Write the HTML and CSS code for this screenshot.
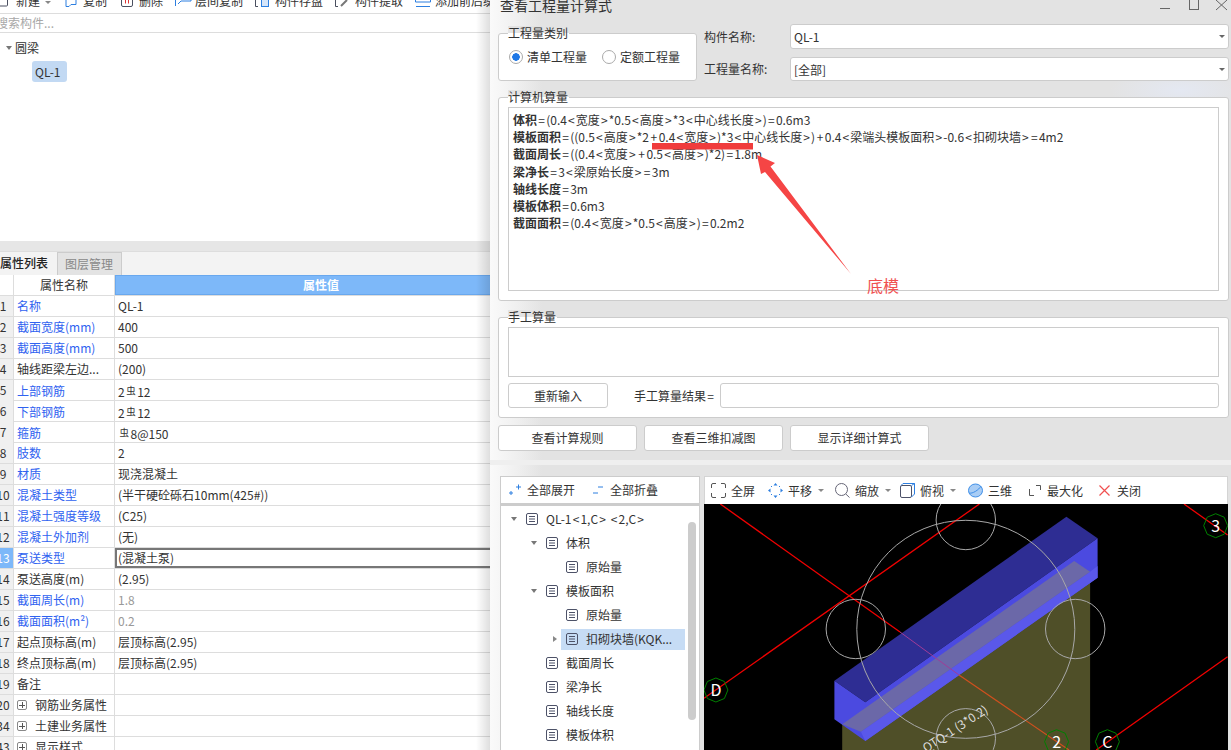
FILE: index.html
```html
<!DOCTYPE html>
<html lang="zh-CN">
<head>
<meta charset="utf-8">
<title>查看工程量计算式</title>
<link rel="stylesheet" href="styles.css">
</head>
<body>
<svg class="defs" width="0" height="0" aria-hidden="true">
  <symbol id="doc" viewBox="0 0 12 12">
    <rect x=".5" y=".5" width="11" height="11" rx="1.5" fill="none" stroke="#4d5268"/>
    <path d="M3 3.5h6M3 6h6M3 8.5h6" stroke="#4d5268" fill="none"/>
  </symbol>
</svg>
<div class="page">
  <section class="left">
    <div class="tools">
      <span class="tool"><svg class="ticon" viewBox="0 -7 14 14"><path d="M1 6h9.5a1 1 0 0 0 1-1v-8M1-7v13" fill="none" stroke="#4a4f60"/></svg>新建<i class="caret"></i></span>
      <span class="tool"><svg class="ticon" viewBox="0 -7 14 14"><path d="M3 2v4.500h3l2-2h5v-11H3z" fill="none" stroke="#2d7fe0"/></svg>复制</span>
      <span class="tool"><svg class="ticon" viewBox="-2 -7 14 14"><rect x="0.500" y="-6" width="11" height="12.500" rx="1.500" fill="none" stroke="#4a4f60"/><path d="M4.500-1.500v5M7.500-1.500v5" stroke="#d33" fill="none"/></svg>删除</span>
      <span class="tool"><svg class="ticon" viewBox="0 -7 14 14"><path d="M.5 6V-3h11M3-3v-3h13v7H6l-3 3" fill="none" stroke="#2d7fe0"/></svg>层间复制</span>
      <span class="tool"><svg class="ticon" viewBox="0 -7 14 14"><path d="M3 6.500H.5V-6H9" fill="none" stroke="#4a4f60"/><rect x="6.500" y="-.5" width="7" height="7" fill="#d6e6fa" stroke="#2d7fe0"/></svg>构件存盘</span>
      <span class="tool"><svg class="ticon" viewBox="0 -7 14 14"><path d="M3 6.500H.5V-6H9" fill="none" stroke="#4a4f60"/><path d="M6 6l6-6" stroke="#777" stroke-width="2"/></svg>构件提取</span>
      <span class="tool"><svg class="ticon" viewBox="0 -7 14 14"><path d="M.5-6h15v8H.5zM1 6.500h14" fill="none" stroke="#2d7fe0"/></svg>添加前后缀</span>
    </div>
    <div class="search">搜索构件...</div>
    <div class="ctree">
      <div class="cgroup"><i class="tri-down"></i>圆梁</div>
      <div class="chip">QL-1</div>
    </div>
    <div class="splitter"></div>
    <div class="tabs">
      <span class="tab tab-on">属性列表</span>
      <span class="tab tab-off">图层管理</span>
    </div>
    <div class="ptable">
      <div class="row head"><span class="num"></span><span class="name center">属性名称</span><span class="val valhead">属性值</span></div>
      <div class="row"><span class="num">1</span><span class="name link">名称</span><span class="val">QL-1</span></div>
      <div class="row"><span class="num">2</span><span class="name link">截面宽度(mm)</span><span class="val">400</span></div>
      <div class="row"><span class="num">3</span><span class="name link">截面高度(mm)</span><span class="val">500</span></div>
      <div class="row"><span class="num">4</span><span class="name">轴线距梁左边...</span><span class="val">(200)</span></div>
      <div class="row"><span class="num">5</span><span class="name link">上部钢筋</span><span class="val">2<span class="rb">虫</span>12</span></div>
      <div class="row"><span class="num">6</span><span class="name link">下部钢筋</span><span class="val">2<span class="rb">虫</span>12</span></div>
      <div class="row"><span class="num">7</span><span class="name link">箍筋</span><span class="val"><span class="rb">虫</span>8@150</span></div>
      <div class="row"><span class="num">8</span><span class="name link">肢数</span><span class="val">2</span></div>
      <div class="row"><span class="num">9</span><span class="name link">材质</span><span class="val">现浇混凝土</span></div>
      <div class="row"><span class="num">10</span><span class="name link">混凝土类型</span><span class="val">(半干硬砼砾石10mm(425#))</span></div>
      <div class="row"><span class="num">11</span><span class="name link">混凝土强度等级</span><span class="val">(C25)</span></div>
      <div class="row"><span class="num">12</span><span class="name link">混凝土外加剂</span><span class="val">(无)</span></div>
      <div class="row"><span class="num num-on">13</span><span class="name link">泵送类型</span><span class="val val-on">(混凝土泵)</span></div>
      <div class="row"><span class="num">14</span><span class="name">泵送高度(m)</span><span class="val">(2.95)</span></div>
      <div class="row"><span class="num">15</span><span class="name link">截面周长(m)</span><span class="val muted">1.8</span></div>
      <div class="row"><span class="num">16</span><span class="name link">截面面积(m²)</span><span class="val muted">0.2</span></div>
      <div class="row"><span class="num">17</span><span class="name">起点顶标高(m)</span><span class="val">层顶标高(2.95)</span></div>
      <div class="row"><span class="num">18</span><span class="name">终点顶标高(m)</span><span class="val">层顶标高(2.95)</span></div>
      <div class="row"><span class="num">19</span><span class="name">备注</span><span class="val"></span></div>
      <div class="row"><span class="num">20</span><span class="name"><i class="plus"></i>钢筋业务属性</span><span class="val"></span></div>
      <div class="row"><span class="num">34</span><span class="name"><i class="plus"></i>土建业务属性</span><span class="val"></span></div>
      <div class="row"><span class="num">43</span><span class="name"><i class="plus"></i>显示样式</span><span class="val"></span></div>
    </div>
  </section>

  <section class="dialog">
    <div class="upper">
      <header class="titlebar">
        <span class="title">查看工程量计算式</span>
        <svg class="winbtns" width="68" height="24" viewBox="0 0 68 24"><path d="M0 15.500h10" stroke="#666" fill="none"/><rect x="29.500" y="0" width="9" height="16.500" fill="none" stroke="#666"/><path d="M56 7l11 10M67 7L56 17" stroke="#666" fill="none"/></svg>
      </header>
      <div class="top">
        <div class="group kind">
          <span class="legend">工程量类别</span>
          <label class="radio"><i class="dot dot-on"></i>清单工程量</label>
          <label class="radio"><i class="dot"></i>定额工程量</label>
        </div>
        <div class="fields">
          <div class="field field-a"><span class="flabel">构件名称:</span><span class="select">QL-1<i class="sel-caret"></i></span></div>
          <div class="field field-b"><span class="flabel">工程量名称:</span><span class="select">[全部]<i class="sel-caret"></i></span></div>
        </div>
      </div>
      <div class="group calc">
        <span class="legend">计算机算量</span>
        <div class="formula">
          <div><b>体积</b><span class="e">=</span>(0.4<span class="s">&lt;</span>宽度<span class="s">&gt;</span>*0.5<span class="s">&lt;</span>高度<span class="s">&gt;</span>*3<span class="s">&lt;</span>中心线长度<span class="s">&gt;</span>)<span class="e">=</span>0.6m3</div>
          <div><b>模板面积</b><span class="e">=</span>((0.5<span class="s">&lt;</span>高度<span class="s">&gt;</span>*2<span class="p">+</span>0.4<span class="s">&lt;</span>宽度<span class="s">&gt;</span>)*3<span class="s">&lt;</span>中心线长度<span class="s">&gt;</span>)<span class="p">+</span>0.4<span class="s">&lt;</span>梁端头模板面积<span class="s">&gt;</span>-0.6<span class="s">&lt;</span>扣砌块墙<span class="s">&gt;</span><span class="e">=</span>4m2</div>
          <div><b>截面周长</b><span class="e">=</span>((0.4<span class="s">&lt;</span>宽度<span class="s">&gt;</span><span class="p">+</span>0.5<span class="s">&lt;</span>高度<span class="s">&gt;</span>)*2)<span class="e">=</span>1.8m</div>
          <div><b>梁净长</b><span class="e">=</span>3<span class="s">&lt;</span>梁原始长度<span class="s">&gt;</span><span class="e">=</span>3m</div>
          <div><b>轴线长度</b><span class="e">=</span>3m</div>
          <div><b>模板体积</b><span class="e">=</span>0.6m3</div>
          <div><b>截面面积</b><span class="e">=</span>(0.4<span class="s">&lt;</span>宽度<span class="s">&gt;</span>*0.5<span class="s">&lt;</span>高度<span class="s">&gt;</span>)<span class="e">=</span>0.2m2</div>
        </div>
      </div>
      <div class="group manual">
        <span class="legend">手工算量</span>
        <div class="manual-input"></div>
        <div class="manual-row">
          <button class="btn btn-re">重新输入</button>
          <span class="mlabel">手工算量结果<span class="e">=</span></span>
          <span class="mresult"></span>
        </div>
      </div>
      <div class="actions">
        <button class="btn btn-act">查看计算规则</button>
        <button class="btn btn-act">查看三维扣减图</button>
        <button class="btn btn-act">显示详细计算式</button>
      </div>
    </div>
    <div class="band"></div>
    <div class="lower">
      <div class="treepanel">
        <div class="bar">
          <span class="bitem exp"><svg width="12" height="12" viewBox="0 0 12 12"><path d="M7 3h5M9.500.5v5M0 9h4M2 7v4" stroke="#2d7fe0" fill="none"/></svg>全部展开</span>
          <span class="bitem col"><svg width="10" height="12" viewBox="0 0 10 12"><path d="M5 3h5M0 9h5" stroke="#2d7fe0" fill="none"/></svg>全部折叠</span>
        </div>
        <div class="qtree">
          <div class="tn l0"><i class="tri-down tt"></i><svg class="docic"><use href="#doc"/></svg><span>QL-1<span class="s">&lt;</span>1,C<span class="s">&gt;</span> <span class="s">&lt;</span>2,C<span class="s">&gt;</span></span></div>
          <div class="tn l1"><i class="tri-down tt"></i><svg class="docic"><use href="#doc"/></svg>体积</div>
          <div class="tn l2"><svg class="docic"><use href="#doc"/></svg>原始量</div>
          <div class="tn l1"><i class="tri-down tt"></i><svg class="docic"><use href="#doc"/></svg>模板面积</div>
          <div class="tn l2"><svg class="docic"><use href="#doc"/></svg>原始量</div>
          <div class="tn l2s"><i class="tri-right"></i><span class="tsel"><svg class="docic"><use href="#doc"/></svg>扣砌块墙(KQK...</span></div>
          <div class="tn l1"><svg class="docic"><use href="#doc"/></svg>截面周长</div>
          <div class="tn l1"><svg class="docic"><use href="#doc"/></svg>梁净长</div>
          <div class="tn l1"><svg class="docic"><use href="#doc"/></svg>轴线长度</div>
          <div class="tn l1"><svg class="docic"><use href="#doc"/></svg>模板体积</div>
          <span class="thumb"></span>
        </div>
      </div>
      <div class="viewpanel">
        <div class="bar vbar">
          <span class="vitem w-a"><svg width="15" height="15" viewBox="0 0 15 15"><path d="M.5 5V2A1.500 1.500 0 0 1 2 .5h3M10 .5h3A1.500 1.500 0 0 1 14.500 2v3M14.500 10v3a1.500 1.500 0 0 1-1.500 1.500h-3M5 14.500H2A1.500 1.500 0 0 1 .5 13v-3" fill="none" stroke="#555"/></svg>全屏</span>
          <span class="vitem w-b"><svg width="15" height="15" viewBox="0 0 15 15"><path d="M7.500 0l2 2.500h-4zM7.500 15l-2-2.500h4zM0 7.500l2.500-2v4zM15 7.500l-2.500 2v-4z" fill="#2d7fe0"/><path d="M3 3l1 1M12 3l-1 1M3 12l1-1M12 12l-1-1" stroke="#2d7fe0"/></svg>平移<i class="caret vcaret"></i></span>
          <span class="vitem w-c"><svg width="15" height="15" viewBox="0 0 15 15"><circle cx="6.500" cy="6.500" r="6" fill="none" stroke="#667"/><path d="M10.800 11l3.700 3.500" stroke="#667" fill="none"/></svg>缩放<i class="caret vcaret"></i></span>
          <span class="vitem w-d"><svg width="15" height="15" viewBox="0 0 15 15"><rect x=".5" y="2.500" width="11" height="12" rx="1.500" fill="none" stroke="#4d5268"/><path d="M1 2.500L3 .5h11.500V11l-3 3M11.500 2.500l3-2" fill="none" stroke="#2d7fe0"/></svg>俯视<i class="caret vcaret"></i></span>
          <span class="vitem w-e"><svg width="15" height="15" viewBox="0 0 15 15"><ellipse cx="7.500" cy="7.500" rx="7" ry="6.500" fill="#a9cdf5" stroke="#3f8fe8"/><path d="M1.500 10C4 11 11 7 13 3" fill="none" stroke="#3f8fe8"/></svg>三维</span>
          <span class="vitem w-f"><svg width="12" height="11" viewBox="0 0 12 11"><path d="M.5 4v6.500H5M7 .5h4.500V5" fill="none" stroke="#555"/></svg>最大化</span>
          <span class="vitem w-g"><svg width="11" height="11" viewBox="0 0 11 11"><path d="M.5.5l10 10M10.500.5l-10 10" fill="none" stroke="#f05050" stroke-width="1.200"/></svg>关闭</span>
        </div>
        <svg class="canvas" viewBox="0 0 524 246" width="524" height="246">
          <rect width="524" height="246" fill="#000"/>
          <polygon points="138.200,219.300 386.100,67.700 386.100,246 138.200,246" fill="#4f4f28"/>
          <g fill="none" stroke="#f00000" stroke-width="1.300">
            <path d="M16.300 0L196 128"/>
            <path d="M275.400 0L0 194.300M480 0l43.600 31M523.600 152.700L392.200 246"/>
          </g>
          <polygon points="130.400,176.700 362.400,12.700 393.600,34.300 161.300,198.300" fill="#2e2d93"/>
          <polygon points="130.400,176.700 161.300,198.300 393.600,34.300 393.600,73.700 161.300,237 130.400,215.300" fill="#4b4ae0"/>
          <polygon points="156.900,227.700 386.100,67.700 393.600,62 393.600,73.700 161.300,237" fill="#5a58ea"/>
          <polygon points="138.200,220.300 370.200,57 386.100,67.700 156.900,227.700" fill="#6b68a8"/>
          <path d="M196 128L255 171" stroke="#a03c98" fill="none"/>
          <path d="M255 171L365 246" stroke="#d0501e" stroke-width="1.200" fill="none"/>
          <g fill="none" stroke="#a8a8a8">
            <circle cx="261.800" cy="125.300" r="109"/>
            <circle cx="261.800" cy="16" r="29.700"/>
            <circle cx="151.800" cy="125" r="29.700"/>
            <circle cx="371.200" cy="125" r="29.700"/>
            <circle cx="261.800" cy="234.300" r="29.700"/>
          </g>
          <g fill="none" stroke="#008000">
            <polygon points="511.700,9.700 520.200,13.200 523.700,21.700 520.200,30.200 511.700,33.700 503.200,30.200 499.700,21.700 503.200,13.200"/>
            <polygon points="11.900,174 20.400,177.500 23.900,186 20.400,194.500 11.900,198 3.400,194.500 -.1,186 3.400,177.500"/>
            <polygon points="352.600,225.700 361.100,229.200 364.600,237.700 361.100,246.200 352.600,249.700 344.100,246.200 340.600,237.700 344.100,229.200"/>
            <polygon points="403.400,225.700 411.900,229.200 415.400,237.700 411.900,246.200 403.400,249.700 394.900,246.200 391.400,237.700 394.900,229.200"/>
          </g>
          <g class="axis">
            <text x="511.700" y="28">3</text>
            <text x="11.900" y="192">D</text>
            <text x="352.600" y="244">2</text>
            <text x="403.400" y="244">C</text>
          </g>
          <text class="wall-label" transform="translate(285 208) rotate(-33)" text-anchor="end">QTQ-1 (3*0.2)</text>
        </svg>
      </div>
    </div>
  </section>

  <svg class="annot" width="1231" height="750" viewBox="0 0 1231 750" aria-hidden="true">
    <rect x="652" y="143" width="101" height="6.500" fill="#f03c3c"/>
    <polygon points="757,155 775,163 770.500,166.500 851,274 765,172 761,174" fill="#f54545"/>
  </svg>
  <span class="note">底模</span>
</div>
</body>
</html>
```

FILE: styles.css
```css
* { box-sizing: border-box; }
html, body { margin: 0; height: 100%; overflow: hidden; background: #fff; }
body { font: 12px/20px "Noto Sans CJK SC", "Liberation Sans", sans-serif; color: #333; }
i { display: inline-block; font-style: normal; }
.defs { position: absolute; }
.page { position: relative; display: flex; width: 1231px; height: 750px; overflow: hidden; }

/* left pane */
.left { position: relative; flex: 0 0 490px; height: 750px; overflow: hidden; background: #fff; }
.left::after { content: ""; position: absolute; top: 0; right: 0; bottom: 0; width: 14px; background: linear-gradient(90deg, rgba(0,0,0,0), rgba(0,0,0,.13)); }
.tools { display: flex; gap: 12px; margin: -8px 0 0 -4px; height: 22px; line-height: 18px; border-bottom: 1px solid #ddd; white-space: nowrap; }
.tool { display: flex; align-items: flex-start; gap: 6px; }
.ticon { width: 14px; height: 14px; margin-top: 1px; overflow: visible; flex: none; }
.caret { width: 0; height: 0; border: 3px solid transparent; border-top: 3px solid #888; border-bottom: 0; align-self: center; margin-left: -1px; }
.search { height: 19px; line-height: 18px; margin-left: -4px; color: #a8a8a8; border-bottom: 1px solid #ddd; }
.ctree { height: 208px; padding-top: 3px; }
.cgroup { display: flex; align-items: center; height: 23px; padding-left: 6px; gap: 3px; }
.tri-down { width: 0; height: 0; border: 3px solid transparent; border-top: 4px solid #777; border-bottom: 0; }
.chip { width: 35px; height: 21px; margin: 2px 0 0 32px; padding-left: 3px; line-height: 21px; background: #c2d9f3; border-radius: 3px; }
.splitter { height: 11px; background: #e6e6e6; border-bottom: 1px solid #ddd; }
.tabs { display: flex; height: 23px; background: #f3f3f3; }
.tab { display: block; height: 23px; line-height: 22px; }
.tab-on { width: 57px; font-weight: 500; color: #222; }
.tab-off { width: 65px; padding-left: 7px; color: #888; background: #e3e3e3; border: 1px solid #ccc; border-bottom: 0; }

.ptable { margin-left: -7px; width: 531px; }
.row { display: grid; grid-template-columns: 21px 101px 1fr; height: 21px; border-bottom: 1px solid #ddd; }
.num { background: #f0f0f0; border-right: 1px solid #ddd; text-align: center; }
.num-on { background: #7db8f9; color: #fff; }
.name { padding-left: 3px; border-right: 1px solid #ddd; white-space: nowrap; overflow: hidden; display: flex; align-items: center; }
.center { justify-content: center; padding: 0; }
.head .num { background: #fff; }
.link { color: #2f62f0; }
.val { padding-left: 3px; white-space: nowrap; }
.valhead { background: #7db8f9; color: #fff; font-weight: 700; text-align: center; border: 1px solid #69a8ee; line-height: 18px; }
.val-on { box-shadow: inset 0 0 0 2px #777; }
.muted { color: #999; }
.rb { font-size: 9.500px; vertical-align: 3px; margin: 0 1.500px; }
.plus { flex: none; width: 10px; height: 10px; margin-right: 8px; border: 1px solid #888; border-radius: 2px; background: linear-gradient(#555,#555) center/6px 1px no-repeat, linear-gradient(#555,#555) center/1px 6px no-repeat; }

/* dialog */
.dialog { flex: 1; min-width: 0; height: 750px; display: flex; flex-direction: column; }
.upper { height: 460px; padding: 0 2px 0 8px; background: radial-gradient(ellipse 70px 24px at 690px 90px, #e4e8f2, rgba(228,232,242,0)), linear-gradient(90deg, #fafafa 0, #efefef 28px, #e3e3e3 52px); }
.titlebar { display: flex; justify-content: space-between; margin: -7px 0 0 2px; height: 31px; padding-bottom: 7px; }
.title { font-size: 14px; line-height: 24px; }
.winbtns { margin-right: 1px; overflow: visible; }
.top { display: flex; gap: 7px; height: 57px; }
.group { position: relative; background: #fff; border: 1px solid #ccc; border-radius: 3px; }
.legend { position: absolute; left: 9px; top: -8px; line-height: 14px; padding-right: 1px; background: linear-gradient(#e3e3e3 50%, #fff 50%); }
.kind { flex: 0 0 199px; margin-top: 9px; display: flex; align-items: center; gap: 15px; padding: 0 0 0 10px; }
.radio { display: flex; align-items: center; gap: 4px; white-space: nowrap; }
.dot { width: 14px; height: 14px; border: 1px solid #aaa; border-radius: 50%; background: #fff; }
.dot-on { background: radial-gradient(circle, #1f78e6 0 3.500px, #fff 4px); }
.fields { flex: 1; display: flex; flex-direction: column; gap: 8px; }
.field { display: flex; align-items: center; }
.field-a { height: 25px; }
.field-b { height: 24px; }
.flabel { width: 86px; flex: none; }
.select { position: relative; flex: 1; height: 100%; padding-left: 3px; line-height: 23px; background: #fff; border: 1px solid #ccc; border-radius: 3px; }
.sel-caret { position: absolute; right: 3px; top: 10px; border: 3px solid transparent; border-top: 3px solid #666; border-bottom: 0; }
.calc { height: 204px; margin-top: 16px; padding: 9px; }
.formula { height: 184px; padding: 3px 4px; line-height: 17.200px; background: #fff; border: 1px solid #ccc; white-space: nowrap; }
.formula b { font-weight: 700; }
.s { margin: 0 1.100px; }
.e { margin: 0 1.250px; }
.p { margin: 0 1.500px; }
.manual { height: 101px; margin-top: 16px; padding: 9px; }
.manual-input { height: 50px; border: 1px solid #ccc; }
.manual-row { display: flex; align-items: center; margin-top: 6px; height: 25px; }
.btn { font: inherit; color: #333; background: #fff; border: 1px solid #ccc; border-radius: 3px; padding: 0; }
.btn-re { width: 100px; height: 25px; }
.mlabel { margin: 0 5px 0 26px; white-space: nowrap; }
.mresult { flex: 1; height: 25px; border: 1px solid #ccc; border-radius: 3px; }
.actions { display: flex; gap: 7px; margin-top: 7px; }
.btn-act { width: 139px; height: 26px; }
.band { height: 5px; background: #efefef; }
.lower { flex: 1; min-height: 0; display: flex; gap: 4px; padding: 11px 3px 0 10px; background: linear-gradient(90deg, #fafafa 0, #efefef 28px, #e3e3e3 52px); overflow: hidden; }
.treepanel { flex: 0 0 200px; display: flex; flex-direction: column; background: #fff; border: 1px solid #ccc; border-width: 1px 1px 0; }
.viewpanel { flex: 1; min-width: 0; display: flex; flex-direction: column; }
.bar { display: flex; align-items: center; flex: none; height: 28px; background: #fff; }
.treepanel .bar { height: 29px; border-bottom: 3px solid #ccc; }
.vbar { border: 1px solid #d4d4d4; border-bottom: 0; }
.bitem { display: flex; align-items: center; white-space: nowrap; }
.exp { margin-left: 8px; gap: 6px; }
.col { margin-left: 18px; gap: 7px; }
.qtree { position: relative; flex: 1; padding-top: 1px; overflow: hidden; }
.tn { position: relative; display: flex; align-items: center; height: 24px; white-space: nowrap; }
.l0 { padding-left: 10px; }
.l1 { padding-left: 45px; }
.l2 { padding-left: 65px; }
.l2s { padding-left: 52px; }
.l0 .tt, .l1 .tt { margin-right: 9px; }
.l1 .tt { margin-left: -15px; }
.docic { flex: none; width: 12px; height: 12px; margin-right: 8px; }
.tri-right { flex: none; width: 0; height: 0; border: 3px solid transparent; border-left: 4px solid #888; border-right: 0; margin-right: 4px; }
.tsel { display: flex; align-items: center; width: 124px; height: 21px; padding-left: 5px; background: #c6dcf5; }
.thumb { position: absolute; right: 3px; top: 16px; width: 8px; height: 198px; background: #ccc; border-radius: 4px; }
.vitem { display: flex; align-items: center; gap: 5px; white-space: nowrap; }
.vcaret { margin-left: 1px; }
.w-a { margin-left: 6px; }
.w-b { margin-left: 13px; }
.w-c { margin-left: 11px; }
.w-d { margin-left: 9px; }
.w-e { margin-left: 12px; }
.w-f { margin-left: 17px; gap: 6px; }
.w-g { margin-left: 16px; gap: 7px; }
.canvas { display: block; flex: none; }
.axis text { fill: #fff; font-size: 16px; text-anchor: middle; }
.wall-label { fill: #ddd; font-size: 12px; }

/* annotation drawn over the dialog */
.annot { position: absolute; left: 0; top: 0; pointer-events: none; }
.note { position: absolute; left: 867px; top: 274px; font-size: 16px; line-height: 22px; color: #f05050; }
```
